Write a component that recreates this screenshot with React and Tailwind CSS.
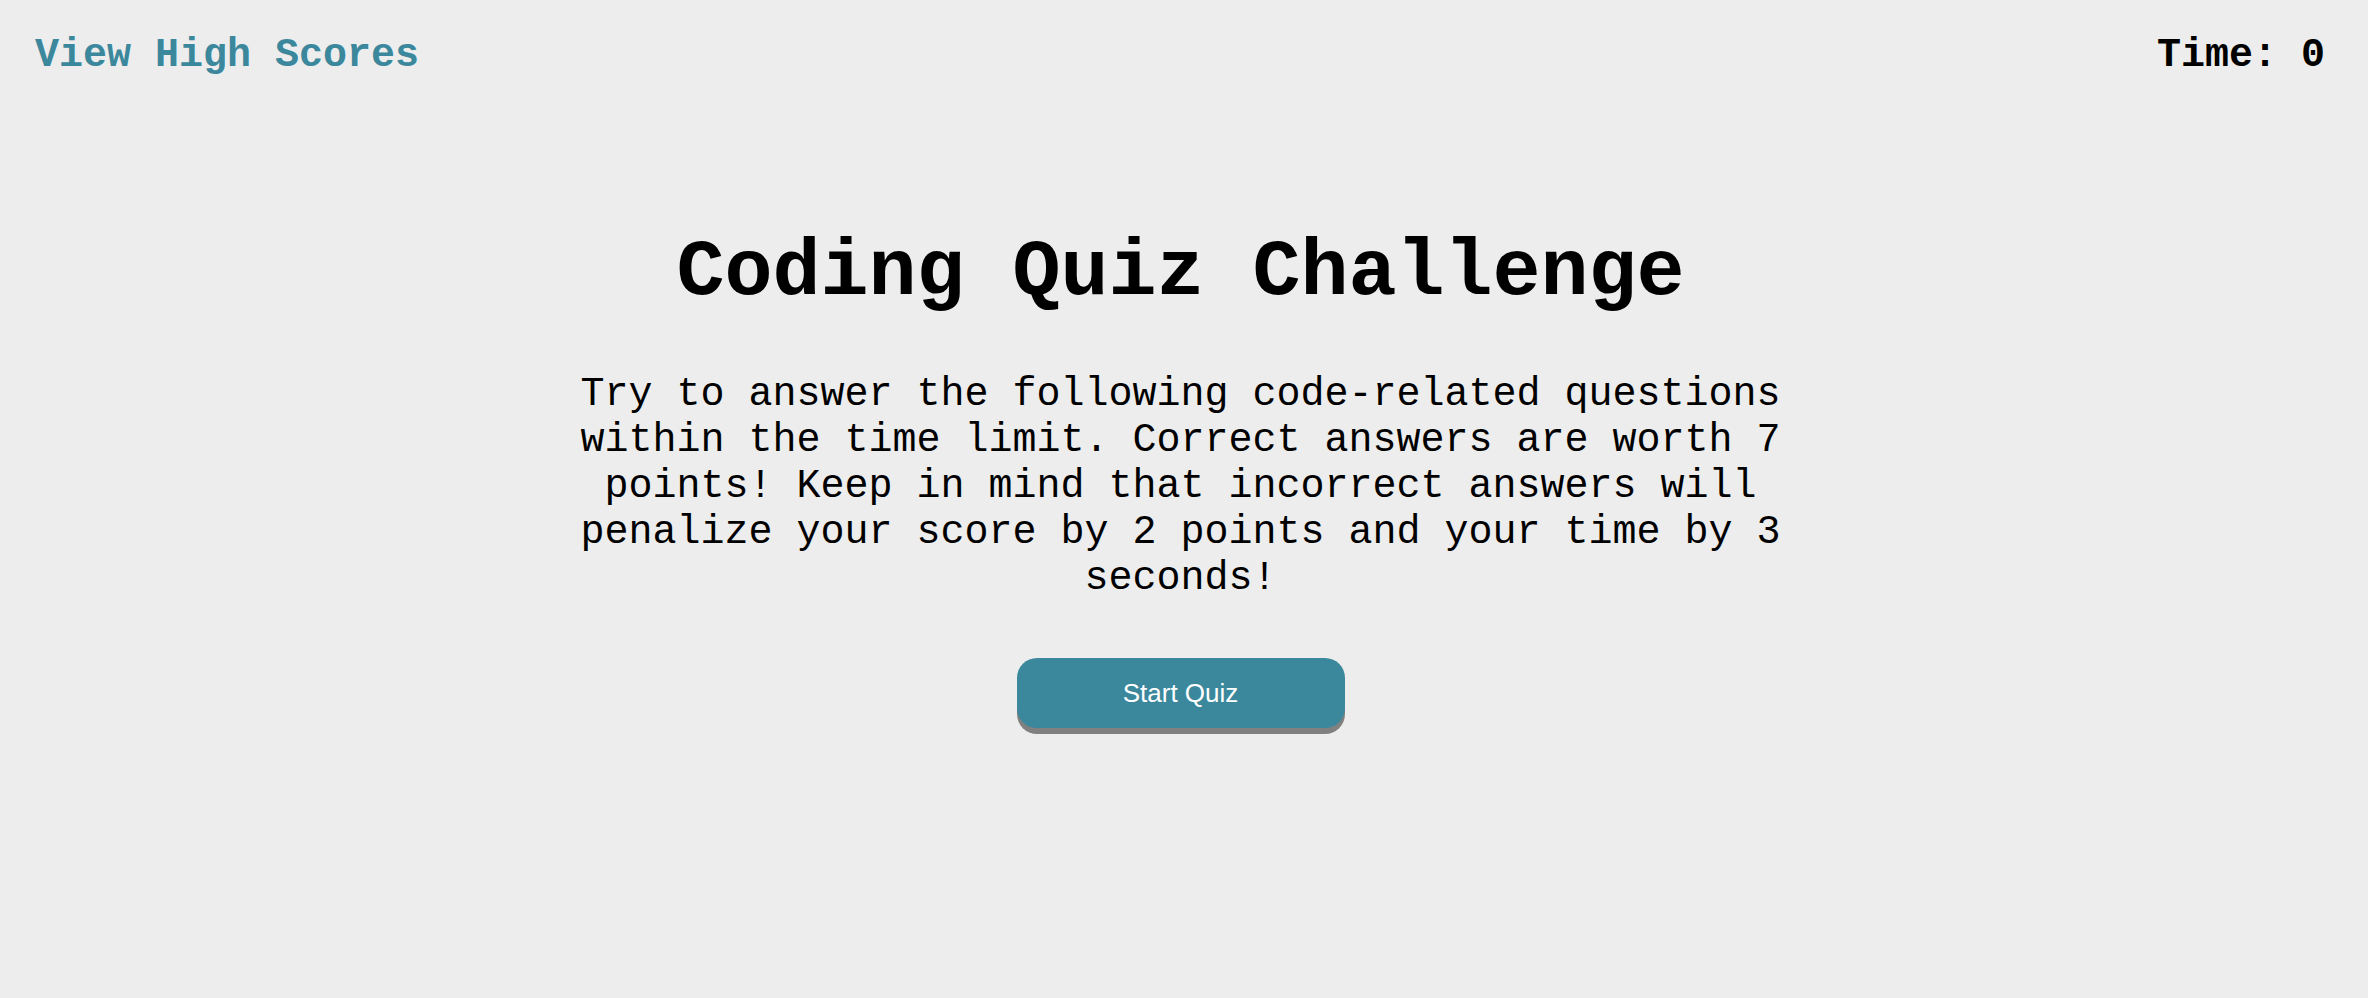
import React from "react";

export default function App() {
  return (
    <div className="min-h-screen bg-[#ededed] text-black font-['Liberation_Mono','Courier_New',monospace]">
      <header className="flex justify-between items-start pl-[35px] pr-[43px] pt-[33px]">
        <a href="#" className="text-[40px] leading-[45px] font-bold text-[#3b889d]">
          View High Scores
        </a>
        <div className="text-[40px] leading-[45px] font-bold">Time: 0</div>
      </header>

      <main className="flex flex-col items-center text-center pr-[7px]">
        <h1 className="mt-[149px] text-[80px] leading-[91px] font-bold">
          Coding Quiz Challenge
        </h1>
        <p className="mt-[54px] w-[1240px] text-[40px] leading-[46px]">
          Try to answer the following code-related questions within the time
          limit. Correct answers are worth 7 points! Keep in mind that
          incorrect answers will penalize your score by 2 points and your time
          by 3 seconds!
        </p>
        <button className="mt-[56px] w-[328px] h-[70px] rounded-[20px] bg-[#3b889d] text-white text-[26px] font-['Liberation_Sans',Arial,sans-serif] shadow-[0_6px_0_#808080]">
          Start Quiz
        </button>
      </main>
    </div>
  );
}
